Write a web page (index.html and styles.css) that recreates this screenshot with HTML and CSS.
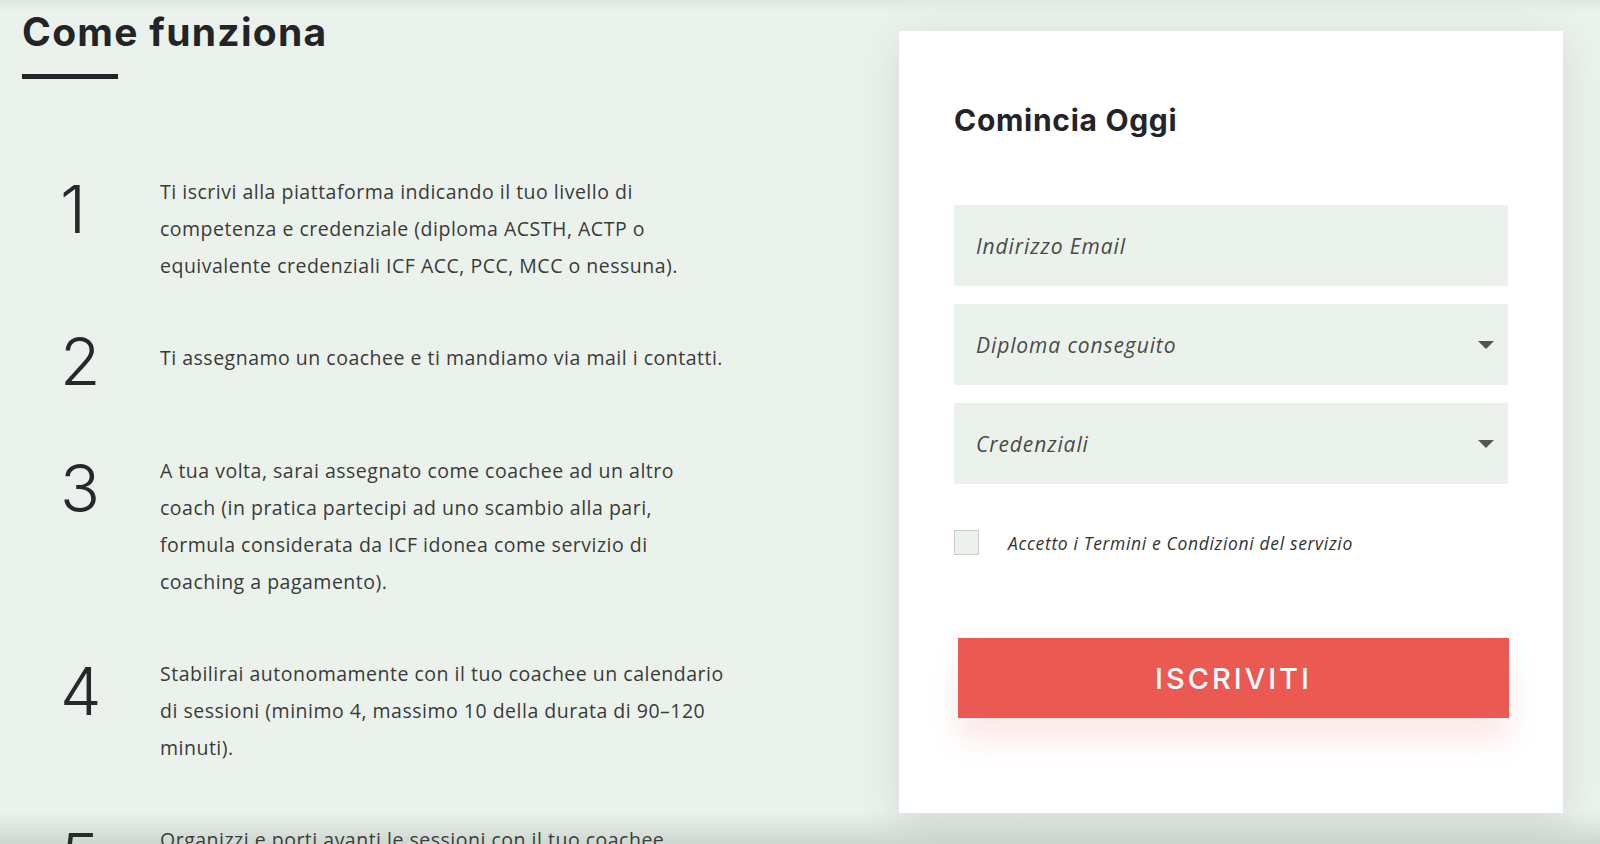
FILE: index.html
```html
<!DOCTYPE html>
<html lang="it">
<head>
  <meta charset="UTF-8">
  <meta name="viewport" content="width=device-width, initial-scale=1.0">
  <title>Come funziona</title>
  <link rel="stylesheet" href="styles.css">
</head>
<body>
  <div class="page">
    <!-- colonna sinistra: i passaggi -->
    <section class="steps">
      <h2 class="section-title">Come funziona</h2>
      <ol class="step-list">
        <li class="step">
          <span class="step-num">1</span>
          <p>Ti iscrivi alla piattaforma indicando il tuo livello di competenza e credenziale (diploma ACSTH, ACTP o equivalente credenziali ICF ACC, PCC, MCC o nessuna).</p>
        </li>
        <li class="step step--short">
          <span class="step-num">2</span>
          <p>Ti assegnamo un coachee e ti mandiamo via mail i contatti.</p>
        </li>
        <li class="step">
          <span class="step-num">3</span>
          <p>A tua volta, sarai assegnato come coachee ad un altro coach (in pratica partecipi ad uno scambio alla pari, formula considerata da ICF idonea come servizio di coaching a pagamento).</p>
        </li>
        <li class="step">
          <span class="step-num">4</span>
          <p>Stabilirai autonomamente con il tuo coachee un calendario di sessioni (minimo 4, massimo 10 della durata di 90–120 minuti).</p>
        </li>
        <li class="step">
          <span class="step-num">5</span>
          <p>Organizzi e porti avanti le sessioni con il tuo coachee registrando le ore di coaching svolte.</p>
        </li>
      </ol>
    </section>

    <!-- modulo di iscrizione -->
    <form class="signup" onsubmit="return false">
      <h3 class="signup-title">Comincia Oggi</h3>
      <input class="field" type="email" placeholder="Indirizzo Email">
      <div class="select-wrap">
        <select class="field">
          <option>Diploma conseguito</option>
          <option>ACSTH</option>
          <option>ACTP</option>
        </select>
        <svg class="caret" width="16" height="8" viewBox="0 0 16 8"><path d="M0 0h16L8 8z" fill="#555"/></svg>
      </div>
      <div class="select-wrap">
        <select class="field">
          <option>Credenziali</option>
          <option>ACC</option>
          <option>PCC</option>
          <option>MCC</option>
        </select>
        <svg class="caret" width="16" height="8" viewBox="0 0 16 8"><path d="M0 0h16L8 8z" fill="#555"/></svg>
      </div>
      <label class="terms">
        <span class="check"></span>
        <span>Accetto i Termini e Condizioni del servizio</span>
      </label>
      <button class="submit" type="submit">Iscriviti</button>
    </form>
  </div>
</body>
</html>
```

FILE: styles.css
```css
body {
    margin: 0;
    height: 844px;
    overflow: hidden;
    background-color: #ebf2ec;
    font-family: "Open Sans", "Liberation Sans", sans-serif;
    color: #333;
}
/* ombre sopra e sotto lo schermo */
body::before,
body::after {
    content: "";
    position: fixed;
    left: 0;
    right: 0;
    pointer-events: none;
    z-index: 10;
}
body::before {
    top: 0;
    height: 12px;
    background: linear-gradient(rgba(0, 30, 0, 0.05), rgba(0, 30, 0, 0));
}
body::after {
    bottom: 0;
    height: 32px;
    background: linear-gradient(rgba(60, 80, 60, 0), rgba(60, 80, 60, 0.16));
}
.page {
    display: flex;
    justify-content: space-between;
    align-items: flex-start;
    padding: 0 37px 0 22px;
}
.steps {
    width: 720px;
}
.section-title {
    margin: 0;
    padding-top: 9px;
    font-family: Inter, "Liberation Sans", sans-serif;
    font-size: 39px;
    font-weight: 700;
    line-height: 46px;
    letter-spacing: 1.3px;
    color: #222428;
}
.section-title::after {
    content: "";
    display: block;
    width: 96px;
    height: 5px;
    margin-top: 19px;
    background-color: #222428;
}
.step-list {
    list-style: none;
    margin: 94px 0 0;
    padding: 0 0 0 38px;
}
.step {
    display: flex;
    align-items: flex-start;
    margin-bottom: 55px;
}
.step-num {
    flex: 0 0 100px;
    padding-top: 14px;
    font-family: Inter, "Liberation Sans", sans-serif;
    font-size: 66px;
    font-weight: 300;
    line-height: 44px;
    color: #26282c;
}
.step--short .step-num {
    padding: 0 0 14px;
}
.step p {
    margin: 0;
    max-width: 566px;
    font-size: 19.5px;
    line-height: 37px;
    letter-spacing: 0.5px;
    color: #3a3a3a;
}
.signup {
    box-sizing: border-box;
    width: 664px;
    height: 782px;
    margin-top: 31px;
    padding: 71px 55px 0;
    background-color: #fff;
    box-shadow: 0 10px 40px rgba(40, 60, 40, 0.12);
}
.signup-title {
    margin: 0 0 67px;
    font-family: Inter, "Liberation Sans", sans-serif;
    font-size: 30px;
    font-weight: 700;
    line-height: 36px;
    letter-spacing: 0.7px;
    color: #222428;
}
.field {
    display: block;
    box-sizing: border-box;
    width: 100%;
    height: 81px;
    margin: 0 0 18px;
    padding: 0 22px;
    border: none;
    border-radius: 0;
    outline: none;
    background-color: #ebf2ec;
    font-family: "Open Sans", "Liberation Sans", sans-serif;
    font-size: 21px;
    font-style: italic;
    letter-spacing: 0.9px;
    color: #4a4a4a;
    appearance: none;
    -webkit-appearance: none;
}
.field::placeholder {
    color: #4a4a4a;
}
.select-wrap {
    position: relative;
}
.caret {
    position: absolute;
    right: 14px;
    top: 37px;
    pointer-events: none;
}
.terms {
    display: flex;
    align-items: center;
    gap: 29px;
    margin-top: 46px;
    font-size: 17.5px;
    font-style: italic;
    letter-spacing: 0.65px;
    color: #333;
}
.check {
    box-sizing: border-box;
    width: 25px;
    height: 25px;
    border: 1px solid #c8d0c9;
    background-color: #ebf2ec;
}
.submit {
    display: block;
    width: 551px;
    height: 80px;
    margin: 83px 0 0 4px;
    border: none;
    background-color: #ea5a53;
    box-shadow: 0 22px 30px rgba(234, 90, 83, 0.14);
    font-family: Inter, "Liberation Sans", sans-serif;
    font-size: 29px;
    font-weight: 500;
    letter-spacing: 3px;
    text-transform: uppercase;
    color: #fff;
    cursor: pointer;
}
```
